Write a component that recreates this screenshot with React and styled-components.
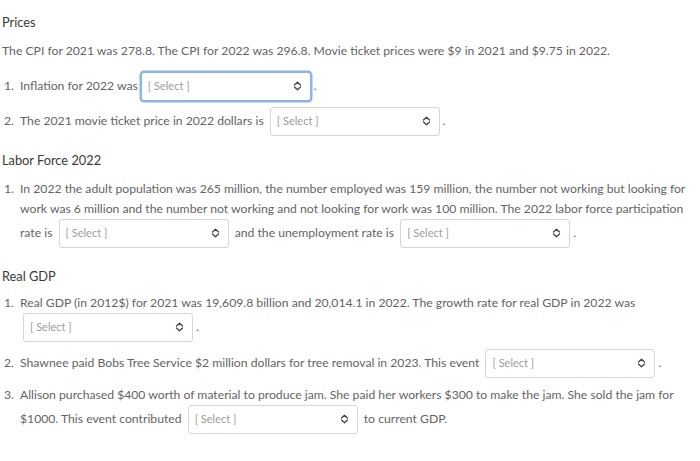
import React from 'react';
import styled, { createGlobalStyle } from 'styled-components';

const GlobalStyle = createGlobalStyle`
  html, body {
    margin: 0;
    padding: 0;
    background: #ffffff;
  }
  body {
    font-family: 'Lato', 'Open Sans', sans-serif;
    color: #646464;
    font-size: 12.2px;
  }
`;

const Page = styled.div`
  padding: 12px 12px 0 2px;
`;

const Section = styled.section`
  margin-bottom: ${p => p.$gap || 18}px;
`;

const Heading = styled.div`
  font-size: 12.8px;
  color: #3a3a3a;
  line-height: 20px;
  margin-bottom: ${p => p.$gap || 9}px;
`;

const Text = styled.p`
  margin: 0 0 11px;
  line-height: 20px;
`;

const List = styled.ol`
  margin: 0;
  padding: 0;
  list-style: none;
  counter-reset: item;
`;

const Item = styled.li`
  line-height: 20px;
  padding-left: 18px;
  margin-bottom: ${p => p.$gap || 6}px;
  counter-increment: item;

  &::before {
    content: counter(item) ".";
    display: inline-block;
    width: 16px;
    margin-left: -16px;
  }
`;

const SelectBox = styled.span`
  display: inline-flex;
  align-items: center;
  justify-content: space-between;
  box-sizing: border-box;
  width: 170px;
  height: 29px;
  margin: 0 3px;
  padding: 0 8px 1px 6px;
  vertical-align: middle;
  border: 1px solid ${p => (p.$focused ? '#8db4e6' : '#d6d6d6')};
  border-radius: 3px;
  box-shadow: ${p => (p.$focused ? '0 0 0 1.5px #8db4e6' : 'none')};
  background: #fff;
  line-height: 16px;
`;

const Placeholder = styled.span`
  font-size: 11px;
  color: #9c9c9c;
`;

const Chevron = styled.svg`
  flex: none;
`;

const Select = ({ focused }) => (
  <SelectBox $focused={focused}>
    <Placeholder>[ Select ]</Placeholder>
    <Chevron width="9" height="10" viewBox="0 0 9 10">
      <path d="M1.5 4 L4.5 1.2 L7.5 4 M1.5 6 L4.5 8.8 L7.5 6" fill="none" stroke="#444" strokeWidth="1.3" strokeLinecap="round" strokeLinejoin="round" />
    </Chevron>
  </SelectBox>
);

const App = () => (
  <>
    <GlobalStyle />
    <Page>
      <Section $gap={14}>
        <Heading>Prices</Heading>
        <Text>
          The CPI for 2021 was 278.8. The CPI for 2022 was 296.8. Movie ticket prices were $9 in 2021 and $9.75 in 2022.
        </Text>
        <List>
          <Item>
            Inflation for 2022 was<Select focused />.
          </Item>
          <Item>
            The 2021 movie ticket price in 2022 dollars is <Select />.
          </Item>
        </List>
      </Section>

      <Section>
        <Heading>Labor Force 2022</Heading>
        <List>
          <Item>
            In 2022 the adult population was 265 million, the number employed was 159 million, the number not working but looking for work was 6 million and the number not working and not looking for work was 100 million. The 2022 labor force participation rate is <Select /> and the unemployment rate is <Select />.
          </Item>
        </List>
      </Section>

      <Section>
        <Heading $gap={7}>Real GDP</Heading>
        <List>
          <Item $gap={7}>
            Real GDP (in 2012$) for 2021 was 19,609.8 billion and 20,014.1 in 2022. The growth rate for real GDP in 2022 was <Select />.
          </Item>
          <Item $gap={7}>
            Shawnee paid Bobs Tree Service $2 million dollars for tree removal in 2023. This event <Select />.
          </Item>
          <Item>
            Allison purchased $400 worth of material to produce jam. She paid her workers $300 to make the jam. She sold the jam for $1000. This event contributed <Select /> to current GDP.
          </Item>
        </List>
      </Section>
    </Page>
  </>
);

export default App;
